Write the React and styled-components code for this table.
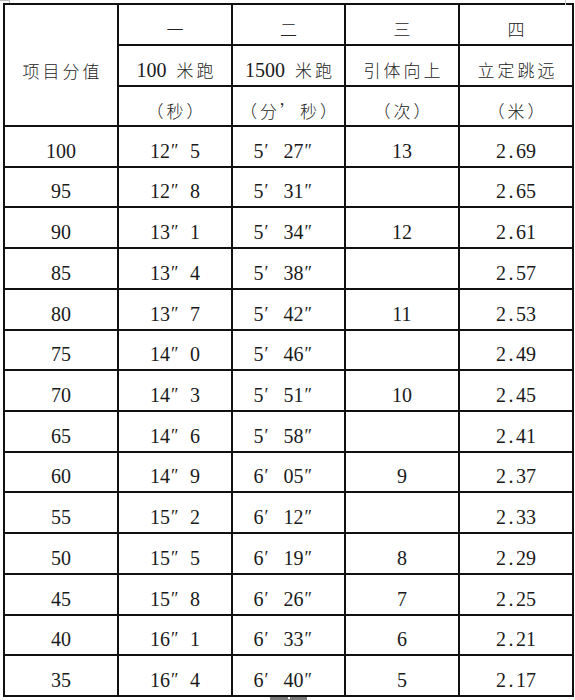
import React from "react";
import styled, { createGlobalStyle } from "styled-components";

const Global = createGlobalStyle`
  html, body { margin: 0; padding: 0; background: #fff; }
  body { font-family: "Liberation Serif", "DejaVu Serif", serif; }
`;

const Page = styled.div`
  position: relative;
  width: 575px;
  height: 700px;
  padding: 3px 0 0 3px;
  box-sizing: border-box;
  overflow: hidden;
`;

const Table = styled.div`
  display: grid;
  grid-template-columns: 112px 112px 111px 112px 112px;
  grid-template-rows: 39px 39px 38px 39px 38px 39px 39px 39px 38px 39px 39px 38px 39px 39px 39px 38px 39px;
  gap: 2px;
  padding: 2px;
  width: max-content;
  background: #111;
`;

const Cell = styled.div`
  background: #fff;
  display: flex;
  align-items: center;
  justify-content: center;
  padding-top: ${(p) => (p.$tall ? 10 : 8)}px;
  box-sizing: border-box;
  color: #1a1a1a;
  font-family: "Liberation Serif", "DejaVu Serif", serif;
  font-size: 20px;
  line-height: 1;
  white-space: nowrap;
  grid-row: ${(p) => p.$row || "auto"};
`;

const Han = styled.span`
  font-family: "Noto Sans CJK SC", "Noto Sans CJK JP", sans-serif;
  font-weight: 300;
  font-size: 17px;
  letter-spacing: ${(p) => p.$spacing ?? 3}px;
  margin-right: ${(p) => -(p.$spacing ?? 3)}px;
  color: #222;
`;

const Gap = styled.span`
  display: inline-block;
  width: ${(p) => p.$w || 10}px;
`;

const Mark = styled.span`
  display: inline-block;
  width: 20px;
  text-align: left;
  font-family: "Liberation Serif", "DejaVu Serif", serif;
  font-size: 18px;
  padding-left: 1px;
  box-sizing: border-box;
`;

const Dot = styled.span`
  display: inline-block;
  width: 10px;
  text-align: center;
`;

const TopMark = styled.div`
  position: absolute;
  top: 0;
  left: 0;
  width: 10px;
  height: 3px;
  border-top: 1px solid #bbb;
  border-right: 1px solid #bbb;
  box-sizing: border-box;
`;

const EdgeLine = styled.div`
  position: absolute;
  top: 0;
  left: 565px;
  width: 1px;
  height: 5px;
  background: #ccc;
`;

const BottomBar = styled.div`
  position: absolute;
  left: 270px;
  top: 697px;
  width: 37px;
  height: 3px;
  background: #7a7a7a;
  &::after {
    content: "";
    position: absolute;
    left: 18px;
    top: 0;
    width: 2px;
    height: 2px;
    background: #fff;
  }
`;

const rows = [
  ["100", "12", "5", "5", "27", "13", "2", "69"],
  ["95", "12", "8", "5", "31", "", "2", "65"],
  ["90", "13", "1", "5", "34", "12", "2", "61"],
  ["85", "13", "4", "5", "38", "", "2", "57"],
  ["80", "13", "7", "5", "42", "11", "2", "53"],
  ["75", "14", "0", "5", "46", "", "2", "49"],
  ["70", "14", "3", "5", "51", "10", "2", "45"],
  ["65", "14", "6", "5", "58", "", "2", "41"],
  ["60", "14", "9", "6", "05", "9", "2", "37"],
  ["55", "15", "2", "6", "12", "", "2", "33"],
  ["50", "15", "5", "6", "19", "8", "2", "29"],
  ["45", "15", "8", "6", "26", "7", "2", "25"],
  ["40", "16", "1", "6", "33", "6", "2", "21"],
  ["35", "16", "4", "6", "40", "5", "2", "17"],
];

export default function App() {
  return (
    <>
      <Global />
      <Page>
        <Table>
          <Cell $row="1 / span 3" $tall>
            <Han>项目分值</Han>
          </Cell>
          <Cell><Han>一</Han></Cell>
          <Cell><Han>二</Han></Cell>
          <Cell><Han>三</Han></Cell>
          <Cell><Han>四</Han></Cell>

          <Cell>100<Gap $w={10} /><Han>米跑</Han></Cell>
          <Cell>1500<Gap $w={10} /><Han>米跑</Han></Cell>
          <Cell><Han>引体向上</Han></Cell>
          <Cell><Han>立定跳远</Han></Cell>

          <Cell><Han>（秒）</Han></Cell>
          <Cell><Han>（分’秒）</Han></Cell>
          <Cell><Han>（次）</Han></Cell>
          <Cell><Han>（米）</Han></Cell>

          {rows.map((r) => (
            <React.Fragment key={r[0]}>
              <Cell>{r[0]}</Cell>
              <Cell>
                {r[1]}
                <Mark>″</Mark>
                {r[2]}
              </Cell>
              <Cell>
                {r[3]}
                <Mark>′</Mark>
                {r[4]}
                <Mark>″</Mark>
              </Cell>
              <Cell>{r[5]}</Cell>
              <Cell>
                {r[6]}
                <Dot>.</Dot>
                {r[7]}
              </Cell>
            </React.Fragment>
          ))}
        </Table>
        <TopMark />
        <EdgeLine />
        <BottomBar />
      </Page>
    </>
  );
}
